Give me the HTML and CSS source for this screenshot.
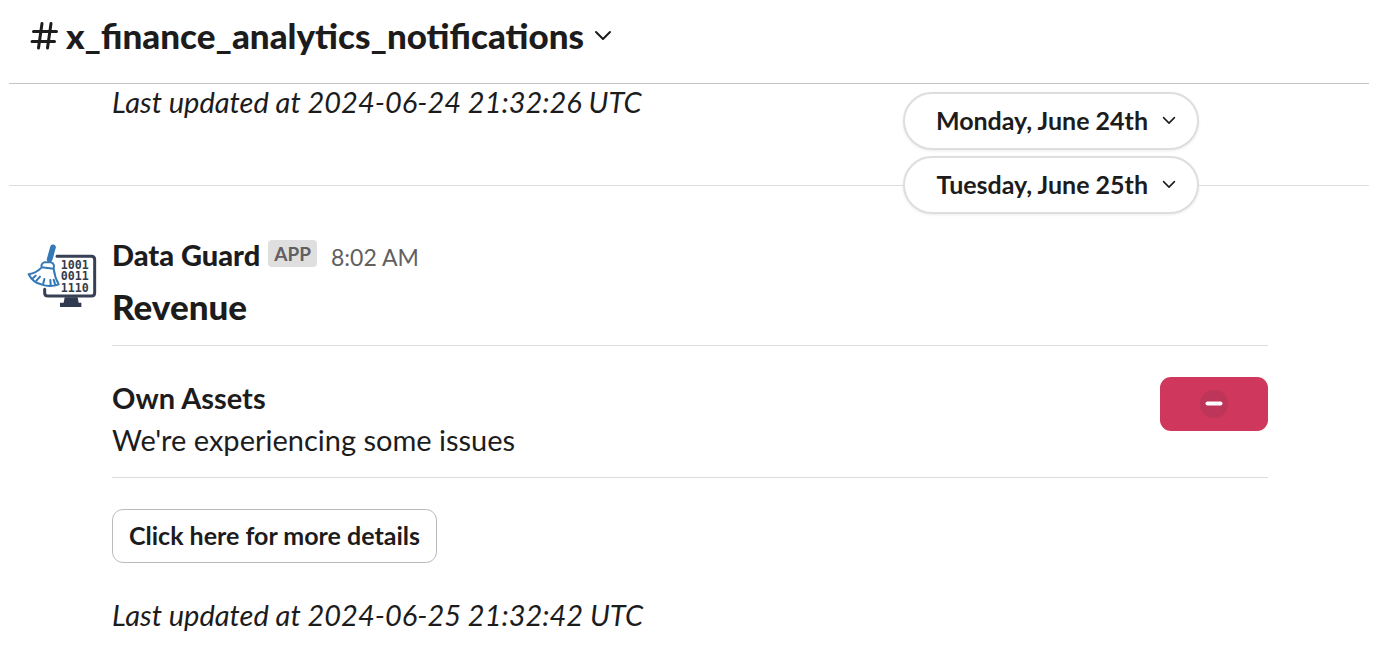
FILE: index.html
```
<!DOCTYPE html>
<html lang="en">
<head>
  <meta charset="utf-8">
  <meta name="viewport" content="width=device-width, initial-scale=1.0">
  <title>x_finance_analytics_notifications</title>
  <link rel="stylesheet" href="styles.css">
</head>
<body>
  <header class="channel-header">
    <h1>
      <button class="channel-name" type="button">
        <svg class="hash" viewBox="0 0 28 30" aria-hidden="true">
          <path d="M3.500 11.500H26.500M2 21.500H24.500M12 3.500L8.500 28M21 3.500L17.500 28"/>
        </svg>
        x_finance_analytics_notifications
        <svg class="chevron" viewBox="0 0 18 12" aria-hidden="true">
          <path d="M2 3L9 10L16 3"/>
        </svg>
      </button>
    </h1>
  </header>

  <main class="messages">
    <div class="previous">
      <p class="updated">Last updated at 2024-06-24 21:32:26 UTC</p>
      <button class="date-pill" type="button">
        Monday, June 24th
        <svg class="chevron chevron-small" viewBox="0 0 18 12" aria-hidden="true">
          <path d="M2 3L9 10L16 3"/>
        </svg>
      </button>
    </div>

    <div class="day-divider">
      <button class="date-pill" type="button">
        Tuesday, June 25th
        <svg class="chevron chevron-small" viewBox="0 0 18 12" aria-hidden="true">
          <path d="M2 3L9 10L16 3"/>
        </svg>
      </button>
    </div>

    <article class="message">
      <svg class="avatar" viewBox="36 30 216 216" aria-hidden="true">
        <!-- monitor -->
        <path class="screen" d="M126 79H229Q239 79 239 89V188Q239 198 229 198H99Q89 198 89 188V178"/>
        <path class="stand" d="M149 202H188L191 218H199V231H135V218H146Z"/>
        <g class="bits">
          <text x="137" y="116">1001</text>
          <text x="137" y="151">0011</text>
          <text x="137" y="186">1110</text>
        </g>
        <!-- broom -->
        <path class="handle" d="M114 52L104 88"/>
        <path class="broom" d="M80 112Q77 101 88 97L108 97Q120 101 116 116ZM80 112Q64 129 41 133Q54 158 78 163Q105 173 131 163Q119 142 116 116ZM65 151L75 140M84 164L88 147M107 165L106 150M55 143L62 137M120 162L116 149"/>
      </svg>
      <div class="message-body">
        <div class="message-meta">
          <strong class="sender">Data Guard</strong>
          <span class="app-badge">APP</span>
          <time class="time" datetime="08:02">8:02 AM</time>
        </div>
        <h2>Revenue</h2>

        <section class="status">
          <div>
            <h3>Own Assets</h3>
            <p>We're experiencing some issues</p>
          </div>
          <button class="status-button" type="button" aria-label="Issue status">
            <svg viewBox="0 0 30 30" aria-hidden="true">
              <circle cx="15" cy="15" r="14"/>
              <path d="M8.500 14.500H21.500"/>
            </svg>
          </button>
        </section>

        <button class="details-button" type="button">Click here for more details</button>
        <p class="updated">Last updated at 2024-06-25 21:32:42 UTC</p>
      </div>
    </article>
  </main>
</body>
</html>
```

FILE: styles.css
```
* {
  box-sizing: border-box;
}

body {
  margin: 0;
  padding: 0 5px 0 9px;
  background-color: #fff;
  color: #1d1c1d;
  font-family: Lato, "Liberation Sans", sans-serif;
  font-size: 29px;
  line-height: 42px;
}

h1,
h2,
h3,
p {
  margin: 0;
}

button {
  font-family: inherit;
  color: inherit;
  cursor: pointer;
}

.channel-header {
  padding: 14px 21px 27px;
  border-bottom: 1px solid #c4c4c4;
}

h1 {
  line-height: 42px;
}

.channel-name {
  display: flex;
  align-items: center;
  padding: 0;
  border: none;
  background: none;
  font-size: 35px;
  font-weight: 900;
  line-height: 42px;
}

.hash {
  width: 28px;
  height: 30px;
  margin-right: 8px;
}

.hash path,
.chevron path {
  fill: none;
  stroke: currentColor;
  stroke-width: 3;
  stroke-linecap: round;
}

.chevron {
  width: 18px;
  height: 12px;
  margin-left: 10px;
}

.chevron path {
  stroke-width: 2;
  stroke-linejoin: round;
}

.chevron-small {
  width: 14px;
  height: 10px;
  margin-left: 14px;
}

.updated {
  font-style: italic;
}

.previous {
  display: flex;
  align-items: flex-start;
  justify-content: space-between;
  height: 72px;
  padding-left: 103px;
  padding-right: 170px;
}

.previous .updated {
  margin-top: -3px;
}

.date-pill {
  display: flex;
  align-items: center;
  height: 58px;
  padding: 0 21px 2px 31px;
  border: 2px solid #dedede;
  border-radius: 29px;
  background-color: #fff;
  box-shadow: 0 1px 3px rgba(0, 0, 0, 0.08);
  font-size: 25px;
  font-weight: 700;
}

.previous .date-pill {
  margin-top: 8px;
}

.day-divider {
  display: flex;
  align-items: center;
}

.day-divider::before,
.day-divider::after {
  content: "";
  flex: 1;
  height: 1px;
  background-color: #dcdcdc;
}

.day-divider::after {
  flex: 0 0 170px;
}

.message {
  display: flex;
  gap: 13px;
  padding: 19px 101px 20px 18px;
}

.avatar {
  flex: none;
  width: 72px;
  height: 72px;
  margin-top: 7px;
}

.screen {
  fill: none;
  stroke: #374055;
  stroke-width: 9;
  stroke-linecap: round;
}

.stand {
  fill: #2f3a50;
}

.bits {
  fill: #333b4c;
  font-family: "DejaVu Sans Mono", "Liberation Mono", monospace;
  font-size: 35px;
  font-weight: 700;
}

.handle {
  fill: none;
  stroke: #3478b8;
  stroke-width: 17;
  stroke-linecap: round;
}

.broom {
  fill: #fff;
  stroke: #3478b8;
  stroke-width: 6;
  stroke-linecap: round;
  stroke-linejoin: round;
}

.message-body {
  flex: 1;
}

.message-meta {
  display: flex;
  align-items: center;
  height: 44px;
}

.sender {
  font-weight: 900;
}

.app-badge {
  margin: 0 14px 3px 8px;
  padding: 0 6px;
  border-radius: 4px;
  background-color: #dfdfdf;
  color: #616061;
  font-size: 19px;
  font-weight: 700;
  line-height: 27px;
}

.time {
  margin-top: 3px;
  color: #616061;
  font-size: 23px;
}

h2 {
  padding: 8px 0 18px;
  font-size: 35px;
  font-weight: 900;
  line-height: 42px;
}

.status {
  display: flex;
  align-items: flex-start;
  justify-content: space-between;
  padding: 31px 0 16px;
  border-top: 1px solid #dcdcdc;
  border-bottom: 1px solid #dcdcdc;
}

h3 {
  font-size: 29px;
  font-weight: 700;
  line-height: 42px;
}

.status-button {
  display: flex;
  align-items: center;
  justify-content: center;
  width: 108px;
  height: 54px;
  padding: 0;
  border: none;
  border-radius: 11px;
  background-color: #cf375c;
}

.status-button svg {
  width: 30px;
  height: 30px;
}

.status-button circle {
  fill: #bd3558;
}

.status-button path {
  stroke: #fff;
  stroke-width: 4;
  stroke-linecap: round;
}

.details-button {
  display: block;
  height: 54px;
  margin: 31px 0;
  padding: 0 16px 2px;
  border: 1px solid #bbb;
  border-radius: 11px;
  background-color: #fff;
  font-size: 25px;
  font-weight: 700;
}
```
